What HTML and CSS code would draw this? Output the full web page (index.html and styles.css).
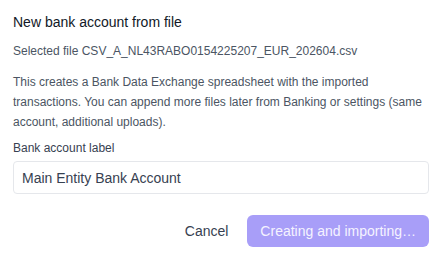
FILE: index.html
```html
<!DOCTYPE html>
<html lang="en">
<head>
  <meta charset="UTF-8">
  <title>New bank account from file</title>
  <link rel="stylesheet" href="styles.css">
</head>
<body>
  <div class="dialog">
    <h2 class="dialog-title">New bank account from file</h2>
    <p class="selected-file">Selected file CSV_A_NL43RABO0154225207_EUR_202604.csv</p>
    <p class="hint">This creates a Bank Data Exchange spreadsheet with the imported transactions. You can append more files later from Banking or settings (same account, additional uploads).</p>

    <label for="account_label" class="field-label">Bank account label</label>
    <input type="text" id="account_label" class="field-input" value="Main Entity Bank Account">

    <div class="actions">
      <button type="button" class="btn-cancel">Cancel</button>
      <button type="button" class="btn-primary" disabled>Creating and importing…</button>
    </div>
  </div>
</body>
</html>
```

FILE: styles.css
```css
body {
  margin: 0;
  font-family: "Liberation Sans", Arial, sans-serif;
  background-color: #ffffff;
  color: #111827;
}

.dialog {
  padding: 12px 13px;
}

.dialog-title {
  margin: 0;
  font-size: 14px;
  font-weight: normal;
  line-height: 20px;
  color: #111827;
}

.selected-file {
  margin: 11px 0 0;
  font-size: 12px;
  line-height: 16px;
  color: #4b5563;
}

.hint {
  margin: 13px 0 0;
  font-size: 12px;
  line-height: 20px;
  color: #4b5563;
}

.field-label {
  display: block;
  margin: 8px 0 5px;
  font-size: 12px;
  line-height: 16px;
  color: #374151;
}

.field-input {
  display: block;
  box-sizing: border-box;
  width: 100%;
  height: 33px;
  padding: 0 8px;
  border: 1px solid #e5e7eb;
  border-radius: 4px;
  font-family: inherit;
  font-size: 14px;
  color: #374151;
}

.actions {
  display: flex;
  justify-content: flex-end;
  align-items: center;
  gap: 19px;
  margin-top: 21px;
}

.btn-cancel {
  background: none;
  border: none;
  padding: 0;
  font-family: inherit;
  font-size: 14px;
  color: #374151;
  cursor: pointer;
}

.btn-primary {
  height: 32px;
  padding: 0 13px;
  border: none;
  border-radius: 6px;
  background-color: #a89ef8;
  font-family: inherit;
  font-size: 14px;
  color: #f5f3ff;
}
```
